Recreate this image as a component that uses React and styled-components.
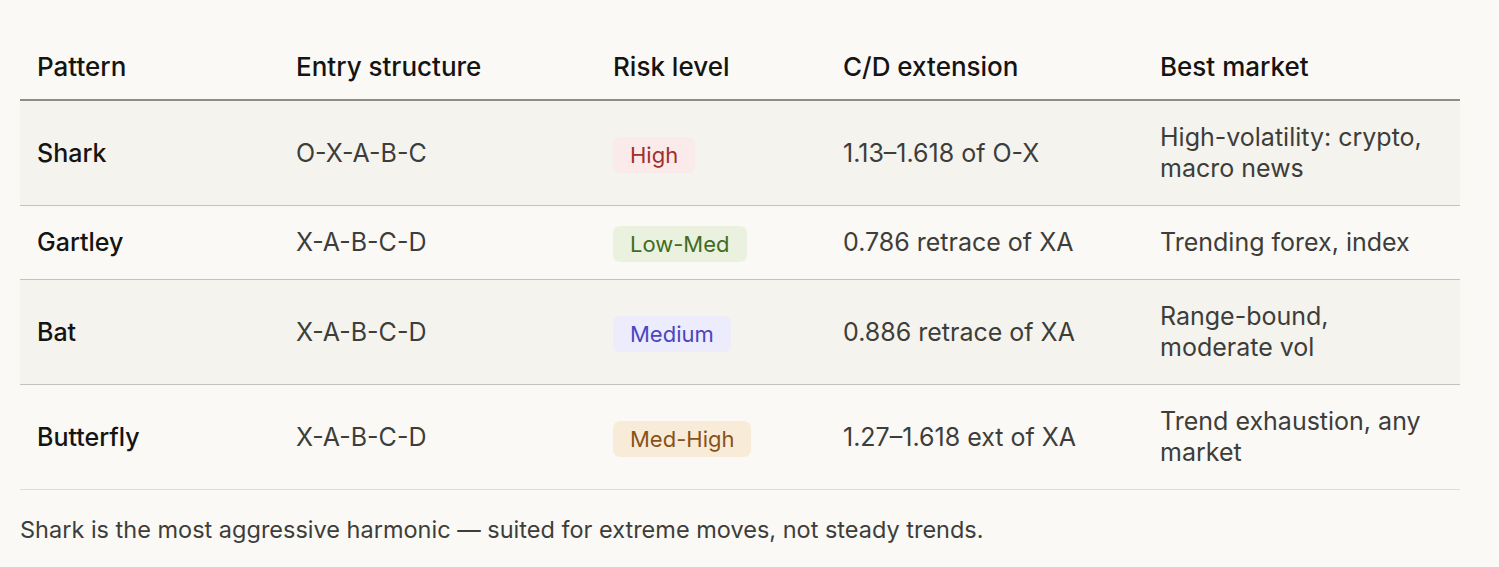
import React from 'react';
import styled, { createGlobalStyle } from 'styled-components';

const rows = [
	{
		pattern: 'Shark',
		entry: 'O-X-A-B-C',
		risk: 'High',
		tone: 'high',
		extension: '1.13–1.618 of O-X',
		market: 'High-volatility: crypto, macro news',
	},
	{
		pattern: 'Gartley',
		entry: 'X-A-B-C-D',
		risk: 'Low-Med',
		tone: 'low',
		extension: '0.786 retrace of XA',
		market: 'Trending forex, index',
	},
	{
		pattern: 'Bat',
		entry: 'X-A-B-C-D',
		risk: 'Medium',
		tone: 'medium',
		extension: '0.886 retrace of XA',
		market: 'Range-bound, moderate vol',
	},
	{
		pattern: 'Butterfly',
		entry: 'X-A-B-C-D',
		risk: 'Med-High',
		tone: 'medhigh',
		extension: '1.27–1.618 ext of XA',
		market: 'Trend exhaustion, any market',
	},
];

const tones = {
	high: { bg: '#fbeaea', fg: '#a12f2c' },
	low: { bg: '#eaf2df', fg: '#426c22' },
	medium: { bg: '#ececfc', fg: '#4c45c0' },
	medhigh: { bg: '#f8ecd9', fg: '#87521a' },
};

function App() {
	return (
		<>
			<GlobalStyle />
			<Page>
				<Table>
					<colgroup>
						<col style={{ width: '259px' }} />
						<col style={{ width: '317px' }} />
						<col style={{ width: '230px' }} />
						<col style={{ width: '317px' }} />
						<col style={{ width: '317px' }} />
					</colgroup>
					<thead>
						<tr>
							<Th>Pattern</Th>
							<Th>Entry structure</Th>
							<Th>Risk level</Th>
							<Th>C/D extension</Th>
							<Th>Best market</Th>
						</tr>
					</thead>
					<tbody>
						{rows.map((r, i) => (
							<Row key={r.pattern} $shaded={i % 2 === 0} $last={i === rows.length - 1}>
								<NameCell>{r.pattern}</NameCell>
								<Td>{r.entry}</Td>
								<Td>
									<Badge $tone={r.tone}>{r.risk}</Badge>
								</Td>
								<Td>{r.extension}</Td>
								<Td>{r.market}</Td>
							</Row>
						))}
					</tbody>
				</Table>
				<Note>
					Shark is the most aggressive harmonic — suited for extreme moves, not
					steady trends.
				</Note>
			</Page>
		</>
	);
}

const GlobalStyle = createGlobalStyle`
	body {
		margin: 0;
		background: #faf9f5;
		font-family: Inter, "Noto Sans", sans-serif;
	}
`;

const Page = styled.div`
	padding: 25px 39px 0 20px;
`;

const Table = styled.table`
	width: 1440px;
	border-collapse: collapse;
	table-layout: fixed;
`;

const Th = styled.th`
	text-align: left;
	font-weight: 500;
	font-size: 26px;
	line-height: 31px;
	color: #141413;
	padding: 26px 17px 17px;
	border-bottom: 2px solid #8d8c87;
`;

const Row = styled.tr`
	background: ${p => (p.$shaded ? '#f4f3ee' : 'transparent')};
	border-bottom: 1px solid ${p => (p.$last ? '#dedcd5' : '#c4c2bc')};
`;

const Td = styled.td`
	font-size: 25px;
	line-height: 31px;
	color: #3d3d3a;
	padding: 21px 17px;
	vertical-align: middle;
`;

const NameCell = styled(Td)`
	font-weight: 500;
	color: #141413;
`;

const Badge = styled.span`
	display: inline-block;
	margin: -5px 0;
	padding: 4px 17px;
	border-radius: 7px;
	font-size: 22px;
	line-height: 28px;
	vertical-align: middle;
	background: ${p => tones[p.$tone].bg};
	color: ${p => tones[p.$tone].fg};
`;

const Note = styled.p`
	margin: 24px 0 0;
	font-size: 23.5px;
	line-height: 31px;
	color: #3d3d3a;
`;

export default App;
